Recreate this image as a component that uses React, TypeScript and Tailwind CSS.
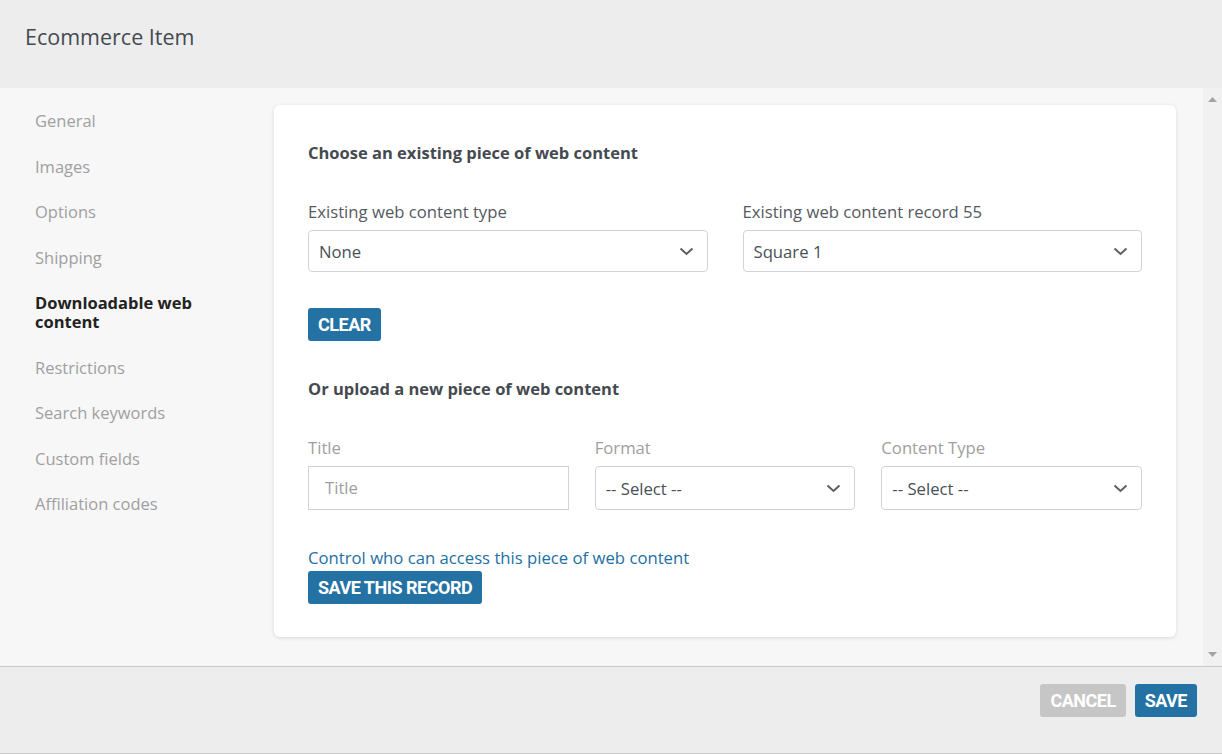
import React from "react";

const navItems = [
  "General",
  "Images",
  "Options",
  "Shipping",
  "Downloadable web content",
  "Restrictions",
  "Search keywords",
  "Custom fields",
  "Affiliation codes",
];

function Chevron() {
  return (
    <svg width="15" height="9" viewBox="0 0 15 9" className="shrink-0">
      <polyline points="1.5,1.5 7.5,7 13.5,1.5" fill="none" stroke="#5a5f66" strokeWidth="2" />
    </svg>
  );
}

function SelectBox({ value, className = "" }: { value: string; className?: string }) {
  return (
    <div
      className={`flex items-center justify-between rounded-[4px] border border-[#ced4da] bg-white pl-[10px] pr-[13px] text-[16.7px] text-[#495057] ${className}`}
    >
      <span className="pt-[1px]">{value}</span>
      <Chevron />
    </div>
  );
}

function Button({ children, muted = false }: { children: React.ReactNode; muted?: boolean }) {
  return (
    <button
      type="button"
      className={`h-[33px] rounded-[3px] px-[10px] font-['Roboto',sans-serif] text-[18px] font-bold tracking-[-0.5px] text-white ${
        muted ? "bg-[#c6c6c6]" : "bg-[#2472a4]"
      }`}
    >
      {children}
    </button>
  );
}

export default function App() {
  return (
    <div className="flex h-[754px] w-[1222px] flex-col overflow-hidden font-['Open_Sans',sans-serif]">
      <header className="flex h-[88px] shrink-0 items-center bg-[#ededed] pb-[14px] pl-[25px]">
        <h1 className="text-[21.5px] text-[#454a50]">Ecommerce Item</h1>
      </header>

      <div className="flex min-h-0 flex-1 bg-[#f7f7f7]">
        <nav className="w-[274px] shrink-0 pl-[35px] pr-[50px] pt-[23px]">
          <ul className="flex flex-col gap-[26.5px]">
            {navItems.map((item) => {
              const active = item === "Downloadable web content";
              return (
                <li
                  key={item}
                  className={`text-[16.5px] leading-[19px] ${
                    active ? "font-bold text-[#222]" : "text-[#a0a0a0]"
                  }`}
                >
                  {item}
                </li>
              );
            })}
          </ul>
        </nav>

        <main className="min-w-0 flex-1 pr-[27px] pt-[17px]">
          <section className="rounded-[6px] bg-white px-[34px] pb-[33px] pt-[36px] shadow-[0_1px_4px_rgba(0,0,0,0.12)]">
            <h2 className="text-[16.5px] font-bold leading-[24px] text-[#454a50]">
              Choose an existing piece of web content
            </h2>

            <div className="mt-[35px] grid grid-cols-2 gap-[35px]">
              <div>
                <label className="block text-[16.7px] leading-[24px] text-[#555a60]">
                  Existing web content type
                </label>
                <SelectBox value="None" className="mt-[6px] h-[42px]" />
              </div>
              <div>
                <label className="block text-[16.7px] leading-[24px] text-[#555a60]">
                  Existing web content record 55
                </label>
                <SelectBox value="Square 1" className="mt-[6px] h-[42px]" />
              </div>
            </div>

            <div className="mt-[36px]">
              <Button>CLEAR</Button>
            </div>

            <h2 className="mt-[36px] text-[16.5px] font-bold leading-[24px] text-[#454a50]">
              Or upload a new piece of web content
            </h2>

            <div className="mt-[35px] grid grid-cols-3 gap-[26px]">
              <div>
                <label className="block text-[16.7px] leading-[24px] text-[#a0a0a0]">Title</label>
                <div className="mt-[6px] flex h-[44px] items-center border border-[#ced4da] bg-white pl-[16px] text-[16.7px] text-[#a0a0a0]">
                  Title
                </div>
              </div>
              <div>
                <label className="block text-[16.7px] leading-[24px] text-[#a0a0a0]">Format</label>
                <SelectBox value="-- Select --" className="mt-[6px] h-[44px]" />
              </div>
              <div>
                <label className="block text-[16.7px] leading-[24px] text-[#a0a0a0]">Content Type</label>
                <SelectBox value="-- Select --" className="mt-[6px] h-[44px]" />
              </div>
            </div>

            <a className="mt-[36px] block text-[16.7px] leading-[24px] text-[#1d6fa5]">
              Control who can access this piece of web content
            </a>
            <div className="mt-[1px]">
              <Button>SAVE THIS RECORD</Button>
            </div>
          </section>
        </main>

        <div className="flex w-[19px] shrink-0 flex-col items-center justify-between bg-[#f1f1f1] py-[9px]">
          <svg width="9" height="5" viewBox="0 0 9 5">
            <polygon points="0,5 4.5,0 9,5" fill="#a3a3a3" />
          </svg>
          <svg width="9" height="5" viewBox="0 0 9 5">
            <polygon points="0,0 9,0 4.5,5" fill="#a3a3a3" />
          </svg>
        </div>
      </div>

      <footer className="flex h-[88px] shrink-0 items-start justify-end gap-[9px] border-b border-t border-[#c9c9c9] bg-[#ededed] pr-[25px] pt-[17px]">
        <Button muted>CANCEL</Button>
        <Button>SAVE</Button>
      </footer>
    </div>
  );
}
